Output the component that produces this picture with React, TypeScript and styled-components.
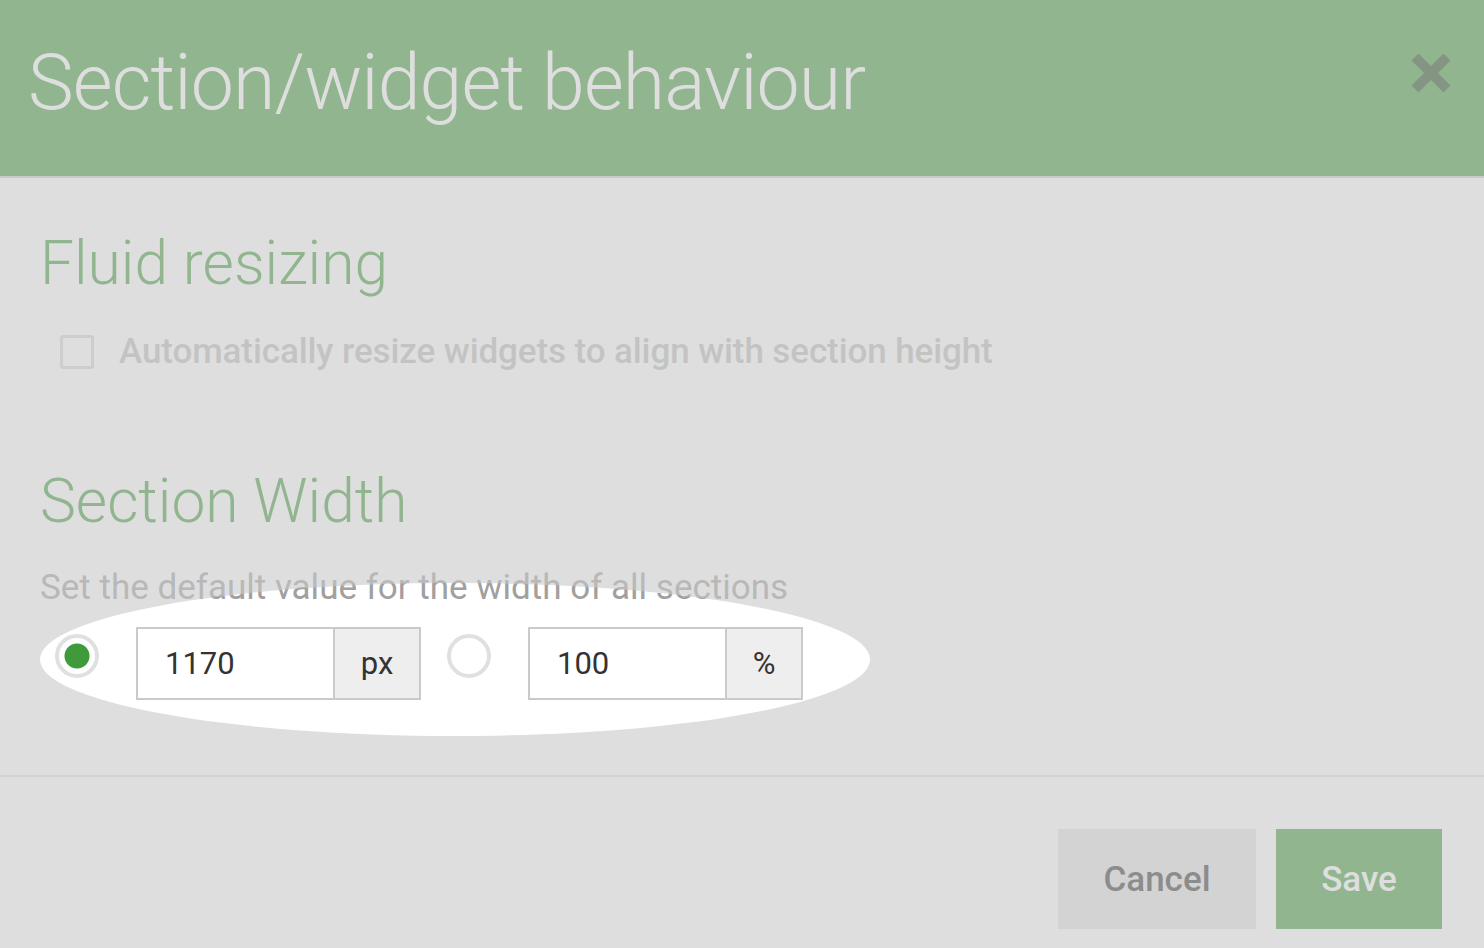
import styled, { createGlobalStyle } from "styled-components";

const green = "#3f9a3b";

const Global = createGlobalStyle`
  html, body {
    margin: 0;
    padding: 0;
  }
  body {
    font-family: Roboto, "Liberation Sans", sans-serif;
    background: #fff;
    overflow: hidden;
  }
`;

const Dialog = styled.div`
  position: relative;
  width: 1484px;
  height: 948px;
  display: flex;
  flex-direction: column;
  background: #fff;
  overflow: hidden;
`;

const Header = styled.header`
  height: 131px;
  padding: 45px 32px 0 28px;
  display: flex;
  justify-content: space-between;
  align-items: flex-start;
  background: ${green};
  border-bottom: 2px solid #cdcdcd;
`;

const Title = styled.h1`
  margin: 0;
  font-size: 77px;
  line-height: 1;
  font-weight: 300;
  color: #fff;
  letter-spacing: -0.9px;
`;

const CloseButton = styled.button`
  margin-top: 7px;
  padding: 0;
  border: 0;
  background: none;
  width: 42px;
  height: 42px;
  color: rgba(0, 0, 0, 0.5);
  cursor: pointer;
`;

const Body = styled.section`
  padding: 54px 40px 75px;
  display: flex;
  flex-direction: column;
  align-items: flex-start;
`;

const Heading = styled.h2<{ $gap?: number }>`
  margin: ${(p) => p.$gap ?? 0}px 0 0;
  font-size: 60.5px;
  line-height: 63px;
  font-weight: 300;
  color: ${green};
`;

const CheckRow = styled.label`
  margin: 40px 0 0 20px;
  height: 34px;
  display: flex;
  align-items: center;
  gap: 25px;
`;

const Checkbox = styled.input`
  appearance: none;
  margin: 0;
  width: 34px;
  height: 34px;
  border: 3px solid #d4d4d4;
  border-radius: 3px;
  background: #fff;
  box-sizing: border-box;
`;

const CheckLabel = styled.span`
  font-size: 35px;
  line-height: 34px;
  font-weight: 500;
  color: #bcbcbc;
  letter-spacing: -0.1px;
`;

const Helper = styled.p`
  margin: 37px 0 0;
  font-size: 35px;
  line-height: 35px;
  color: #a0a0a0;
`;

const WidthRow = styled.div`
  position: relative;
  margin-top: 22px;
  display: flex;
  align-items: flex-start;
`;

const Spotlight = styled.div`
  position: absolute;
  left: 0;
  top: -44px;
  width: 830px;
  height: 153px;
  border-radius: 50%;
  box-shadow: 0 0 0 4000px rgba(200, 200, 200, 0.6);
  pointer-events: none;
  z-index: 10;
`;

const Radio = styled.input<{ $gapRight: number; $gapLeft?: number }>`
  appearance: none;
  margin: 7px ${(p) => p.$gapRight}px 0 ${(p) => p.$gapLeft ?? 0}px;
  width: 44px;
  height: 44px;
  border: 4px solid #e0e0e0;
  border-radius: 50%;
  background: #fff;
  box-sizing: border-box;
  &:checked {
    background: radial-gradient(circle, ${green} 0 12px, #fff 13px);
  }
`;

const InputGroup = styled.div`
  display: flex;
  height: 73px;
  border: 2px solid #cacaca;
  box-sizing: border-box;
  background: #fff;
`;

const ValueInput = styled.input`
  width: 197px;
  margin: 0;
  padding: 0 0 0 27px;
  border: 0;
  border-right: 2px solid #cacaca;
  box-sizing: border-box;
  font: inherit;
  font-size: 31px;
  color: #333;
  background: #fff;
  outline: none;
`;

const Addon = styled.span<{ $width: number }>`
  width: ${(p) => p.$width}px;
  display: flex;
  align-items: center;
  justify-content: center;
  background: #eee;
  font-size: 31px;
  color: #333;
`;

const Footer = styled.footer`
  flex: 1;
  border-top: 2px solid #e0e0e0;
  padding: 52px 42px 0 0;
  display: flex;
  justify-content: flex-end;
  align-items: flex-start;
  gap: 20px;
`;

const Button = styled.button<{ $primary?: boolean; $width: number }>`
  width: ${(p) => p.$width}px;
  height: 100px;
  border: 0;
  font-family: inherit;
  font-size: 35px;
  font-weight: 500;
  background: ${(p) => (p.$primary ? green : "#e3e3e3")};
  color: ${(p) => (p.$primary ? "#fff" : "#323232")};
  cursor: pointer;
`;

const CloseIcon = () => (
  <svg width="42" height="42" viewBox="0 0 42 42">
    <path
      d="M5 5 L37 37 M37 5 L5 37"
      stroke="currentColor"
      strokeWidth="10"
      strokeLinecap="butt"
      fill="none"
    />
  </svg>
);

export default function App() {
  return (
    <Dialog>
      <Global />
      <Header>
        <Title>Section/widget behaviour</Title>
        <CloseButton aria-label="Close">
          <CloseIcon />
        </CloseButton>
      </Header>

      <Body>
        <Heading>Fluid resizing</Heading>
        <CheckRow>
          <Checkbox type="checkbox" />
          <CheckLabel>
            Automatically resize widgets to align with section height
          </CheckLabel>
        </CheckRow>

        <Heading $gap={101}>Section Width</Heading>
        <Helper>Set the default value for the width of all sections</Helper>

        <WidthRow>
          <Spotlight />
          <Radio
            type="radio"
            name="width"
            defaultChecked
            $gapLeft={15}
            $gapRight={37}
          />
          <InputGroup>
            <ValueInput defaultValue="1170" />
            <Addon $width={84}>px</Addon>
          </InputGroup>
          <Radio type="radio" name="width" $gapLeft={26} $gapRight={37} />
          <InputGroup>
            <ValueInput defaultValue="100" />
            <Addon $width={74}>%</Addon>
          </InputGroup>
        </WidthRow>
      </Body>

      <Footer>
        <Button $width={198}>Cancel</Button>
        <Button $primary $width={166}>
          Save
        </Button>
      </Footer>
    </Dialog>
  );
}
